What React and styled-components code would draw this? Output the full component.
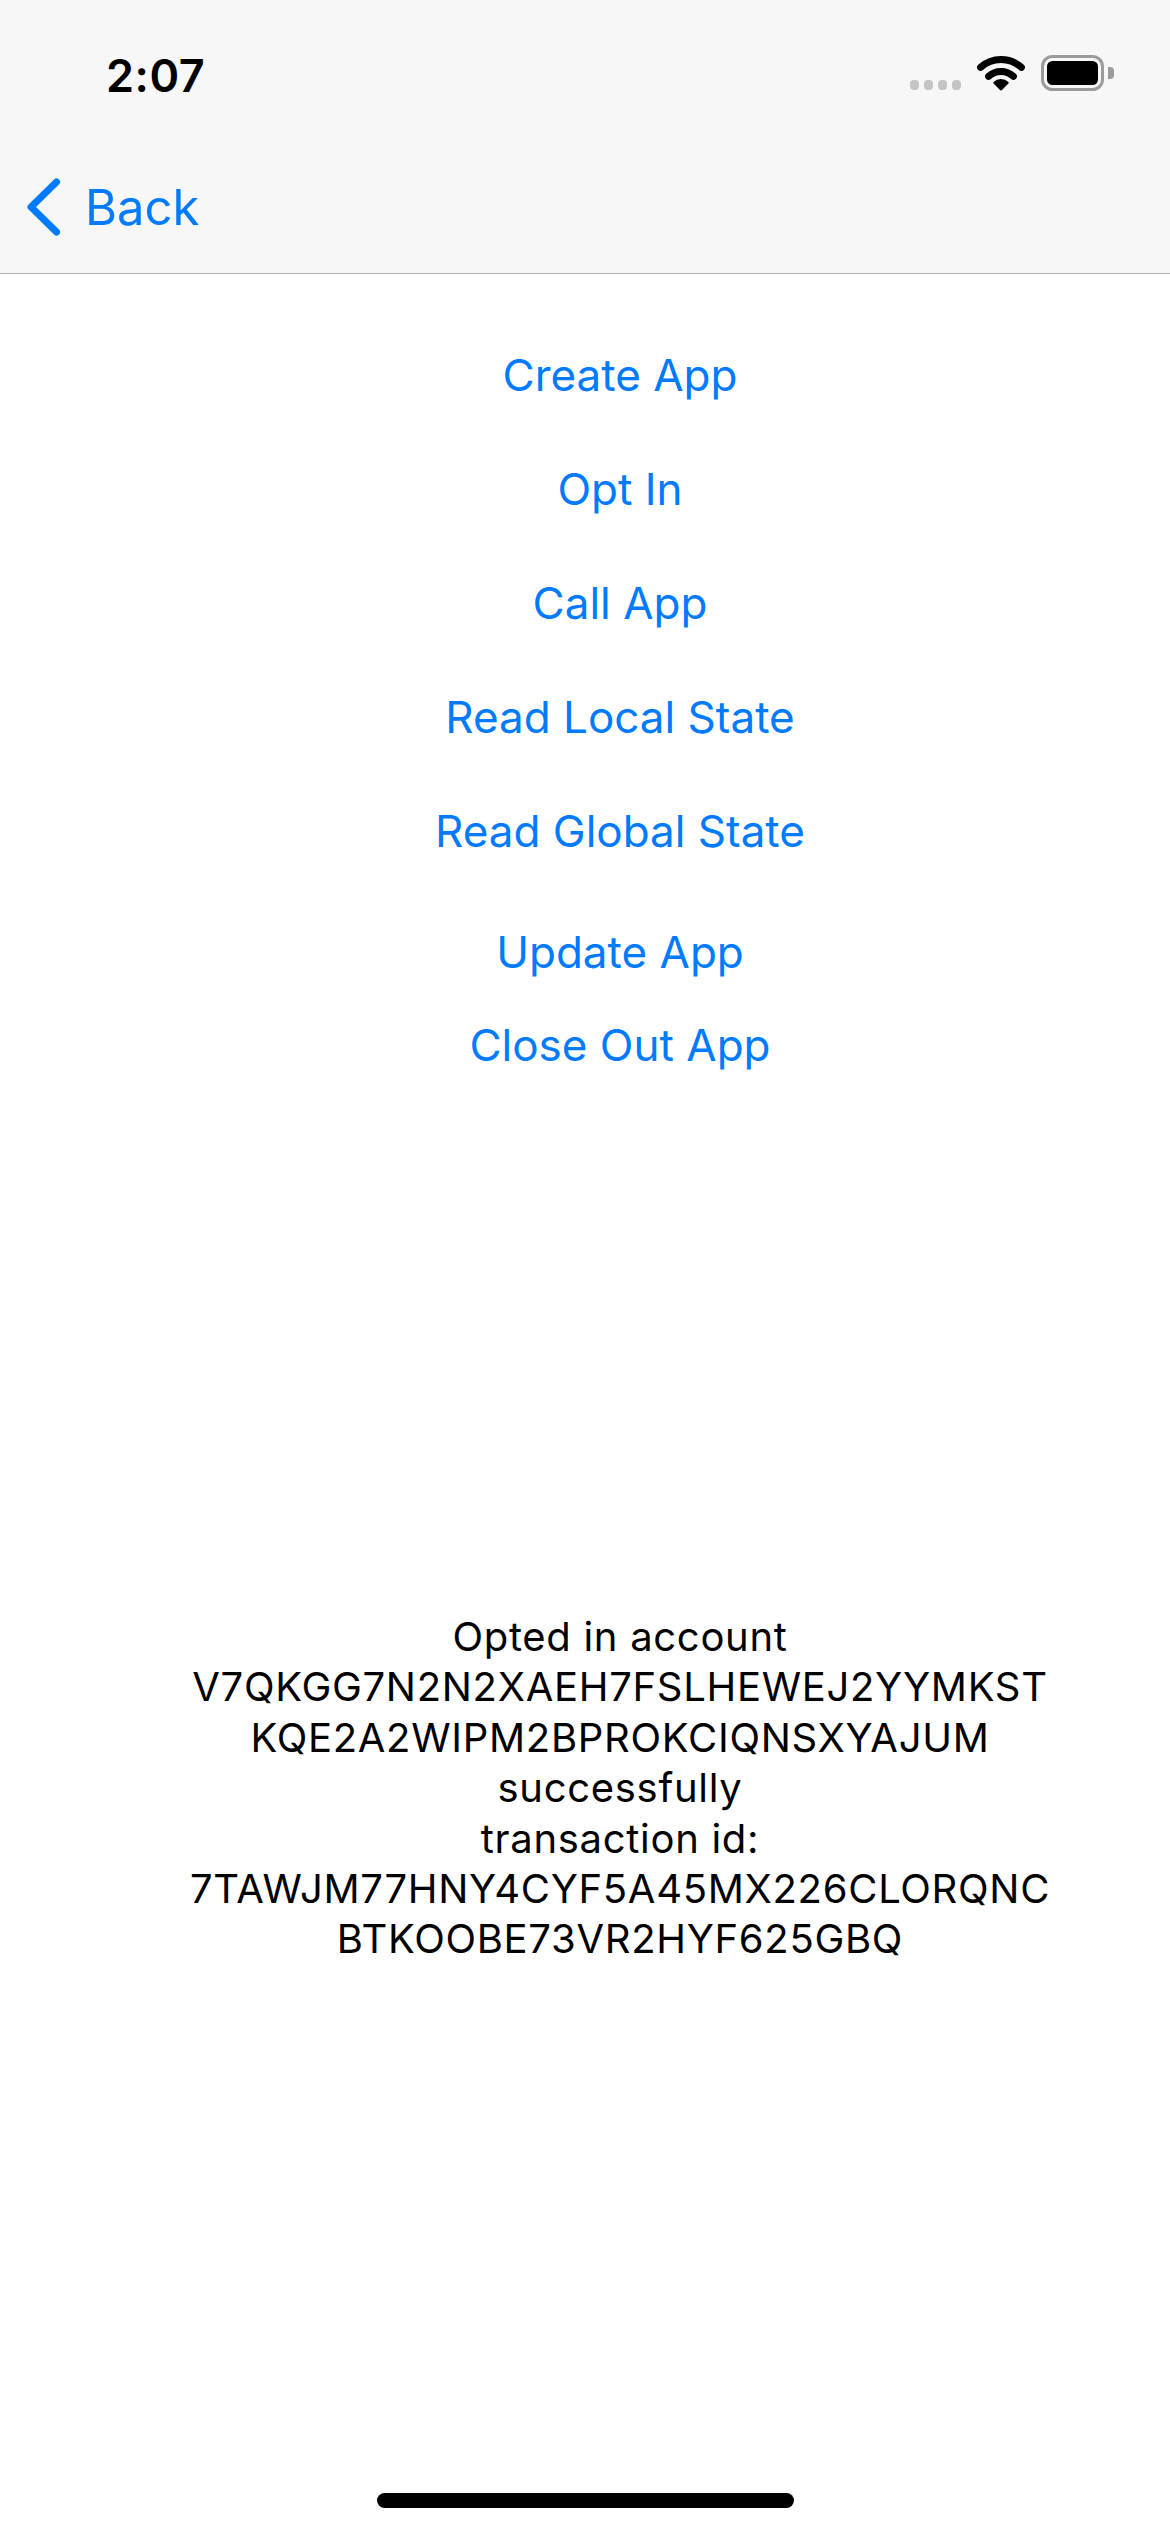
import React from "react";
import styled, { createGlobalStyle } from "styled-components";

const GlobalStyle = createGlobalStyle`
  html, body {
    margin: 0;
    padding: 0;
    background: #ffffff;
  }
  body {
    font-family: Inter, "Noto Sans", "Liberation Sans", sans-serif;
  }
`;

const Screen = styled.div`
  width: 1170px;
  height: 2532px;
  display: flex;
  flex-direction: column;
  background: #ffffff;
  overflow: hidden;
`;

const Header = styled.header`
  background: #f7f7f7;
  border-bottom: 1px solid #b1b1b1;
`;

const StatusBar = styled.div`
  height: 141px;
  box-sizing: border-box;
  display: flex;
  justify-content: space-between;
  align-items: flex-start;
  padding: 53px 54px 0 106px;
`;

const Time = styled.span`
  font-size: 45px;
  line-height: 45px;
  font-weight: 600;
  color: #000;
  letter-spacing: 0.5px;
`;

const StatusIcons = styled.div`
  display: flex;
  align-items: flex-end;
  gap: 16px;
  padding-top: 2px;
`;

const Signal = styled.div`
  display: flex;
  gap: 5px;
  margin-bottom: 1px;
`;

const SignalDot = styled.span`
  width: 9px;
  height: 10px;
  border-radius: 4px;
  background: #c4c4c4;
`;

const NavBar = styled.nav`
  height: 132px;
  display: flex;
  align-items: center;
  padding-left: 25px;
`;

const BackButton = styled.button`
  display: flex;
  align-items: center;
  gap: 24px;
  border: none;
  background: none;
  padding: 0;
  color: #007aff;
  font-family: inherit;
  font-size: 49px;
  cursor: pointer;
`;

const Content = styled.main`
  flex: 1;
  display: flex;
  flex-direction: column;
  align-items: center;
  padding: 71px 0 0 70px;
`;

const ButtonGroup = styled.div`
  display: flex;
  flex-direction: column;
  align-items: center;
  gap: ${(p) => p.$gap}px;
  margin-top: ${(p) => p.$top || 0}px;
`;

const ActionButton = styled.button`
  border: none;
  background: none;
  padding: 0;
  height: 60px;
  font-family: inherit;
  font-size: 44px;
  line-height: 60px;
  color: #007aff;
  cursor: pointer;
`;

const Message = styled.div`
  margin-top: 537px;
  text-align: center;
  color: #000;
  font-size: 40px;
  line-height: 50.4px;
  letter-spacing: 0.7px;
`;

const Line = styled.div`
  white-space: nowrap;
`;

const HomeBar = styled.div`
  display: flex;
  justify-content: center;
  padding-bottom: 24px;
`;

const HomeIndicator = styled.span`
  width: 417px;
  height: 15px;
  border-radius: 8px;
  background: #000;
`;

const WifiIcon = () => (
  <svg width="48" height="36" viewBox="0 0 48 36">
    <g fill="none" stroke="#000" strokeWidth="7" strokeLinecap="round">
      <path d="M3.6 12.3 A30.5 30.5 0 0 1 44.4 12.3" />
      <path d="M11.6 21.3 A18.5 18.5 0 0 1 36.4 21.3" />
    </g>
    <path
      d="M24 34.5 L17.3 27.8 A9.5 9.5 0 0 1 30.7 27.8 Z"
      fill="#000"
      stroke="#000"
      strokeWidth="2"
      strokeLinejoin="round"
    />
  </svg>
);

const BatteryIcon = () => (
  <svg width="75" height="36" viewBox="0 0 75 36">
    <rect x="1.5" y="1.5" width="60" height="33" rx="10" fill="none" stroke="#9b9b9b" strokeWidth="3" />
    <rect x="6" y="6" width="51" height="24" rx="5.5" fill="#000" />
    <path d="M67 12 h2 a4 4 0 0 1 4 4 v4 a4 4 0 0 1 -4 4 h-2 Z" fill="#9b9b9b" />
  </svg>
);

const ChevronLeft = () => (
  <svg width="36" height="58" viewBox="0 0 36 58">
    <polyline
      points="31.5,4 6,29 31.5,54"
      fill="none"
      stroke="#007aff"
      strokeWidth="7"
      strokeLinecap="round"
      strokeLinejoin="round"
    />
  </svg>
);

const firstActions = ["Create App", "Opt In", "Call App", "Read Local State", "Read Global State"];
const lastActions = ["Update App", "Close Out App"];

const messageLines = [
  "Opted in account",
  "V7QKGG7N2N2XAEH7FSLHEWEJ2YYMKST",
  "KQE2A2WIPM2BPROKCIQNSXYAJUM",
  "successfully",
  "transaction id:",
  "7TAWJM77HNY4CYF5A45MX226CLORQNC",
  "BTKOOBE73VR2HYF625GBQ",
];

export default function App() {
  return (
    <Screen>
      <GlobalStyle />
      <Header>
        <StatusBar>
          <Time>2:07</Time>
          <StatusIcons>
            <Signal>
              {[0, 1, 2, 3].map((i) => (
                <SignalDot key={i} />
              ))}
            </Signal>
            <WifiIcon />
            <BatteryIcon />
          </StatusIcons>
        </StatusBar>
        <NavBar>
          <BackButton>
            <ChevronLeft />
            Back
          </BackButton>
        </NavBar>
      </Header>

      <Content>
        <ButtonGroup $gap={54}>
          {firstActions.map((label) => (
            <ActionButton key={label}>{label}</ActionButton>
          ))}
        </ButtonGroup>
        <ButtonGroup $gap={33} $top={61}>
          {lastActions.map((label) => (
            <ActionButton key={label}>{label}</ActionButton>
          ))}
        </ButtonGroup>

        <Message>
          {messageLines.map((line) => (
            <Line key={line}>{line}</Line>
          ))}
        </Message>
      </Content>

      <HomeBar>
        <HomeIndicator />
      </HomeBar>
    </Screen>
  );
}
